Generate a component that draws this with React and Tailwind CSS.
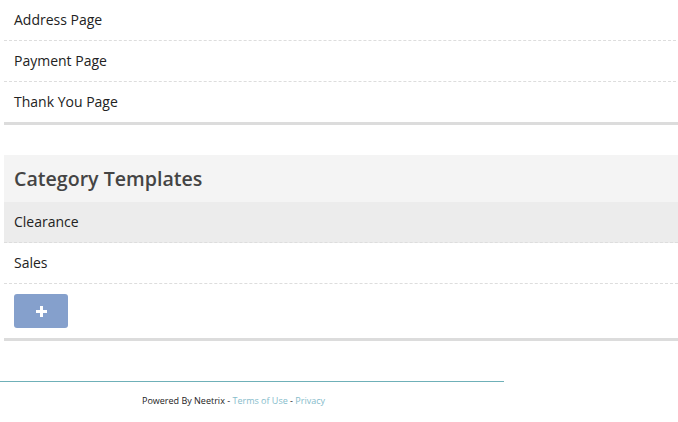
import React from "react";

const pages = ["Address Page", "Payment Page", "Thank You Page"];
const categories = [
  { name: "Clearance", active: true },
  { name: "Sales", active: false },
];

const Row = ({ label, active }) => (
  <div
    className={`h-[41px] flex items-center pl-[10px] pb-[2px] border-b border-dashed border-[#dddddd] text-[14px] text-[#222222] ${
      active ? "bg-[#ececec]" : ""
    }`}
  >
    {label}
  </div>
);

const App = () => {
  return (
    <div className="w-[678px] h-[422px] bg-white overflow-hidden font-['Open_Sans',sans-serif]">
      <div className="ml-[4px] border-b-[3px] border-[#dcdcdc]">
        {pages.map((p, i) => (
          <div
            key={p}
            className={`flex items-center pl-[10px] pb-[2px] text-[14px] text-[#222222] ${
              i < pages.length - 1 ? "h-[41px] border-b border-dashed border-[#dddddd] mr-[2px]" : "h-[40px]"
            }`}
          >
            {p}
          </div>
        ))}
      </div>

      <div className="ml-[4px] mt-[30px] border-b-[3px] border-[#dcdcdc]">
        <div className="h-[47px] bg-[#f4f4f4] flex items-center pl-[10px]">
          <h2 className="text-[19.6px] font-semibold text-[#444444]">Category Templates</h2>
        </div>
        {categories.map((c) => (
          <Row key={c.name} label={c.name} active={c.active} />
        ))}
        <div className="pl-[10px] pt-[10px] pb-[10px]">
          <button className="w-[54px] h-[34px] rounded-[3px] bg-[#85a0cc] flex items-center justify-center">
            <svg width="11" height="11" viewBox="0 0 11 11">
              <rect x="4" y="0" width="3" height="11" fill="white" />
              <rect x="0" y="4" width="11" height="3" fill="white" />
            </svg>
          </button>
        </div>
      </div>

      <div className="mt-[40px] w-[504px] border-t border-[#6fb0b8]">
        <p className="pl-[142px] pt-[12px] text-[9px] text-[#222222]">
          Powered By Neetrix -{" "}
          <a className="text-[#86bccb]">Terms of Use</a> -{" "}
          <a className="text-[#86bccb]">Privacy</a>
        </p>
      </div>
    </div>
  );
};

export default App;
